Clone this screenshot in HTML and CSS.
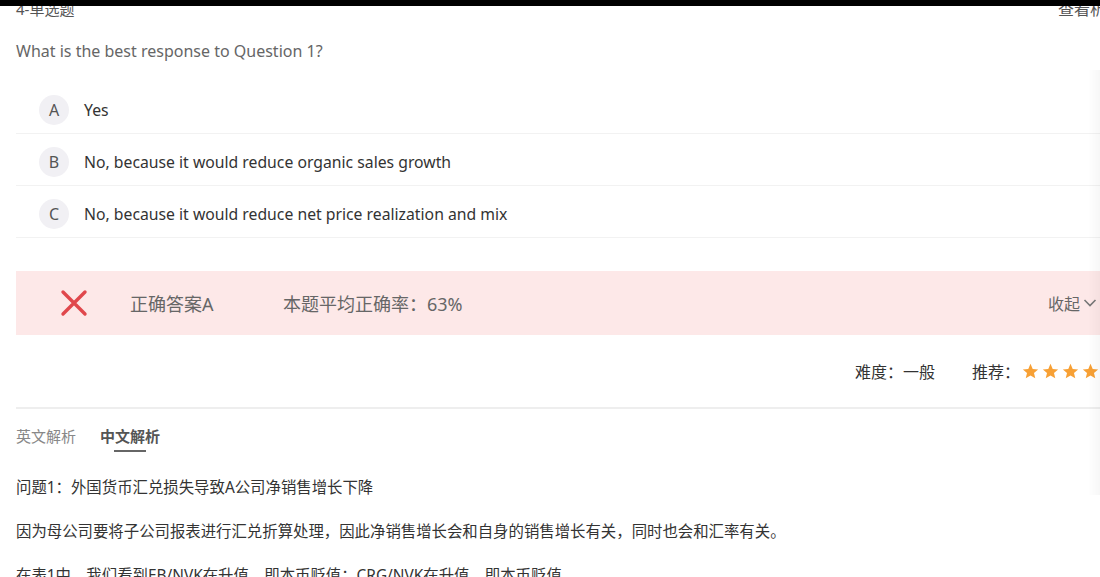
FILE: index.html
```html
<!DOCTYPE html>
<html lang="zh-CN">
<head>
<meta charset="utf-8">
<title>单选题</title>
<link rel="stylesheet" href="styles.css">
</head>
<body>
<div class="topbar"></div>
<div class="edge-shadow"></div>
<main class="page">
  <div class="head">
    <span class="qtype">4-单选题</span>
    <span class="view">查看析</span>
  </div>
  <p class="question">What is the best response to Question 1?</p>
  <ul class="options">
    <li class="option"><span class="letter">A</span><span class="opt-text">Yes</span></li>
    <li class="option"><span class="letter">B</span><span class="opt-text">No, because it would reduce organic sales growth</span></li>
    <li class="option"><span class="letter">C</span><span class="opt-text">No, because it would reduce net price realization and mix</span></li>
  </ul>
  <div class="result">
    <svg class="wrong" width="28" height="28" viewBox="0 0 28 28"><path d="M3 3 L25 25 M25 3 L3 25" stroke="#e0474c" stroke-width="3.4" stroke-linecap="round" fill="none"/></svg>
    <span class="answer">正确答案A</span>
    <span class="rate">本题平均正确率：63%</span>
    <span class="collapse">收起<svg width="14" height="10" viewBox="0 0 14 10"><path d="M1.5 2 L7 7.5 L12.5 2" stroke="#777" stroke-width="1.6" fill="none"/></svg></span>
  </div>
  <div class="meta">
    <span class="difficulty">难度：一般</span>
    <span class="recommend">推荐：
      <span class="stars">
        <svg class="star" viewBox="0 0 20 20"><path d="M10 1 L12.6 7 L19 7.5 L14.1 11.7 L15.6 18 L10 14.6 L4.4 18 L5.9 11.7 L1 7.5 L7.4 7 Z" fill="#f7a035"/></svg>
        <svg class="star" viewBox="0 0 20 20"><path d="M10 1 L12.6 7 L19 7.5 L14.1 11.7 L15.6 18 L10 14.6 L4.4 18 L5.9 11.7 L1 7.5 L7.4 7 Z" fill="#f7a035"/></svg>
        <svg class="star" viewBox="0 0 20 20"><path d="M10 1 L12.6 7 L19 7.5 L14.1 11.7 L15.6 18 L10 14.6 L4.4 18 L5.9 11.7 L1 7.5 L7.4 7 Z" fill="#f7a035"/></svg>
        <svg class="star" viewBox="0 0 20 20"><path d="M10 1 L12.6 7 L19 7.5 L14.1 11.7 L15.6 18 L10 14.6 L4.4 18 L5.9 11.7 L1 7.5 L7.4 7 Z" fill="#f7a035"/></svg>
        <svg class="star" viewBox="0 0 20 20"><path d="M10 1 L12.6 7 L19 7.5 L14.1 11.7 L15.6 18 L10 14.6 L4.4 18 L5.9 11.7 L1 7.5 L7.4 7 Z" fill="#f7a035"/></svg>
      </span>
    </span>
  </div>
  <div class="tabs">
    <span class="tab">英文解析</span>
    <span class="tab active">中文解析</span>
  </div>
  <div class="analysis">
    <p>问题1：外国货币汇兑损失导致A公司净销售增长下降</p>
    <p>因为母公司要将子公司报表进行汇兑折算处理，因此净销售增长会和自身的销售增长有关，同时也会和汇率有关。</p>
    <p>在表1中，我们看到EB/NVK在升值，即本币贬值；CRG/NVK在升值，即本币贬值</p>
  </div>
</main>
</body>
</html>
```

FILE: styles.css
```css
html, body {
  margin: 0;
  padding: 0;
  overflow: hidden;
  background: #fff;
}
body {
  font-family: "Noto Sans", "Noto Sans CJK SC", sans-serif;
  color: #333;
  width: 1100px;
  height: 577px;
}
.topbar {
  position: fixed;
  top: 0;
  left: 0;
  width: 1100px;
  height: 6px;
  background: #000;
  z-index: 10;
}
.edge-shadow {
  position: fixed;
  top: 70px;
  right: 0;
  width: 12px;
  height: 425px;
  background: linear-gradient(to right, rgba(0,0,0,0), rgba(0,0,0,0.03));
  z-index: 5;
}
.page {
  width: 1090px;
  padding-left: 16px;
}
.head {
  display: flex;
  justify-content: space-between;
  height: 20px;
  line-height: 20px;
  font-size: 15px;
  color: #555;
  margin-top: -1px;
}
.view {
  font-size: 16px;
}
.question {
  margin: 20px 0 0;
  font-size: 16px;
  line-height: 24px;
  color: #666;
}
.options {
  list-style: none;
  margin: 19px 0 0;
  padding: 0;
}
.option {
  box-sizing: border-box;
  display: flex;
  align-items: center;
  height: 52px;
  padding-top: 5px;
  border-bottom: 1px solid #f2f2f2;
  padding-left: 23px;
  font-size: 15.75px;
  color: #333;
}
.letter {
  width: 30px;
  height: 30px;
  border-radius: 50%;
  background: #f1f0f4;
  color: #555;
  display: flex;
  align-items: center;
  justify-content: center;
  margin-right: 15px;
  font-size: 16px;
}
.result {
  margin-top: 33px;
  height: 64px;
  background: #fde8e8;
  display: flex;
  align-items: center;
  padding-left: 44px;
  padding-right: 9px;
  font-size: 18px;
  color: #666;
}
.wrong {
  flex: none;
  margin-right: 42px;
}
.answer {
  width: 153px;
}
.collapse {
  margin-left: auto;
  display: flex;
  align-items: center;
  gap: 3px;
  font-size: 16px;
  color: #666;
}
.meta {
  display: flex;
  justify-content: flex-end;
  align-items: center;
  height: 72px;
  border-bottom: 2px solid #eeeeee;
  font-size: 16px;
  color: #333;
}
.difficulty {
  margin-right: 37px;
}
.recommend {
  display: flex;
  align-items: center;
  margin-right: -13px;
}
.stars {
  display: flex;
  gap: 3px;
  margin-left: 2px;
}
.star {
  width: 17px;
  height: 17px;
}
.tabs {
  display: flex;
  gap: 24px;
  margin-top: 15px;
  font-size: 15px;
  line-height: 24px;
}
.tab {
  color: #888;
  position: relative;
  padding-bottom: 4px;
}
.tab.active {
  color: #555;
  font-weight: bold;
}
.tab.active::after {
  content: "";
  position: absolute;
  left: 50%;
  bottom: 0;
  width: 32px;
  margin-left: -16px;
  height: 2px;
  background: #666;
}
.analysis {
  margin-top: 14px;
  font-size: 15.4px;
  color: #333;
}
.analysis p {
  margin: 0;
  line-height: 44px;
}
```
